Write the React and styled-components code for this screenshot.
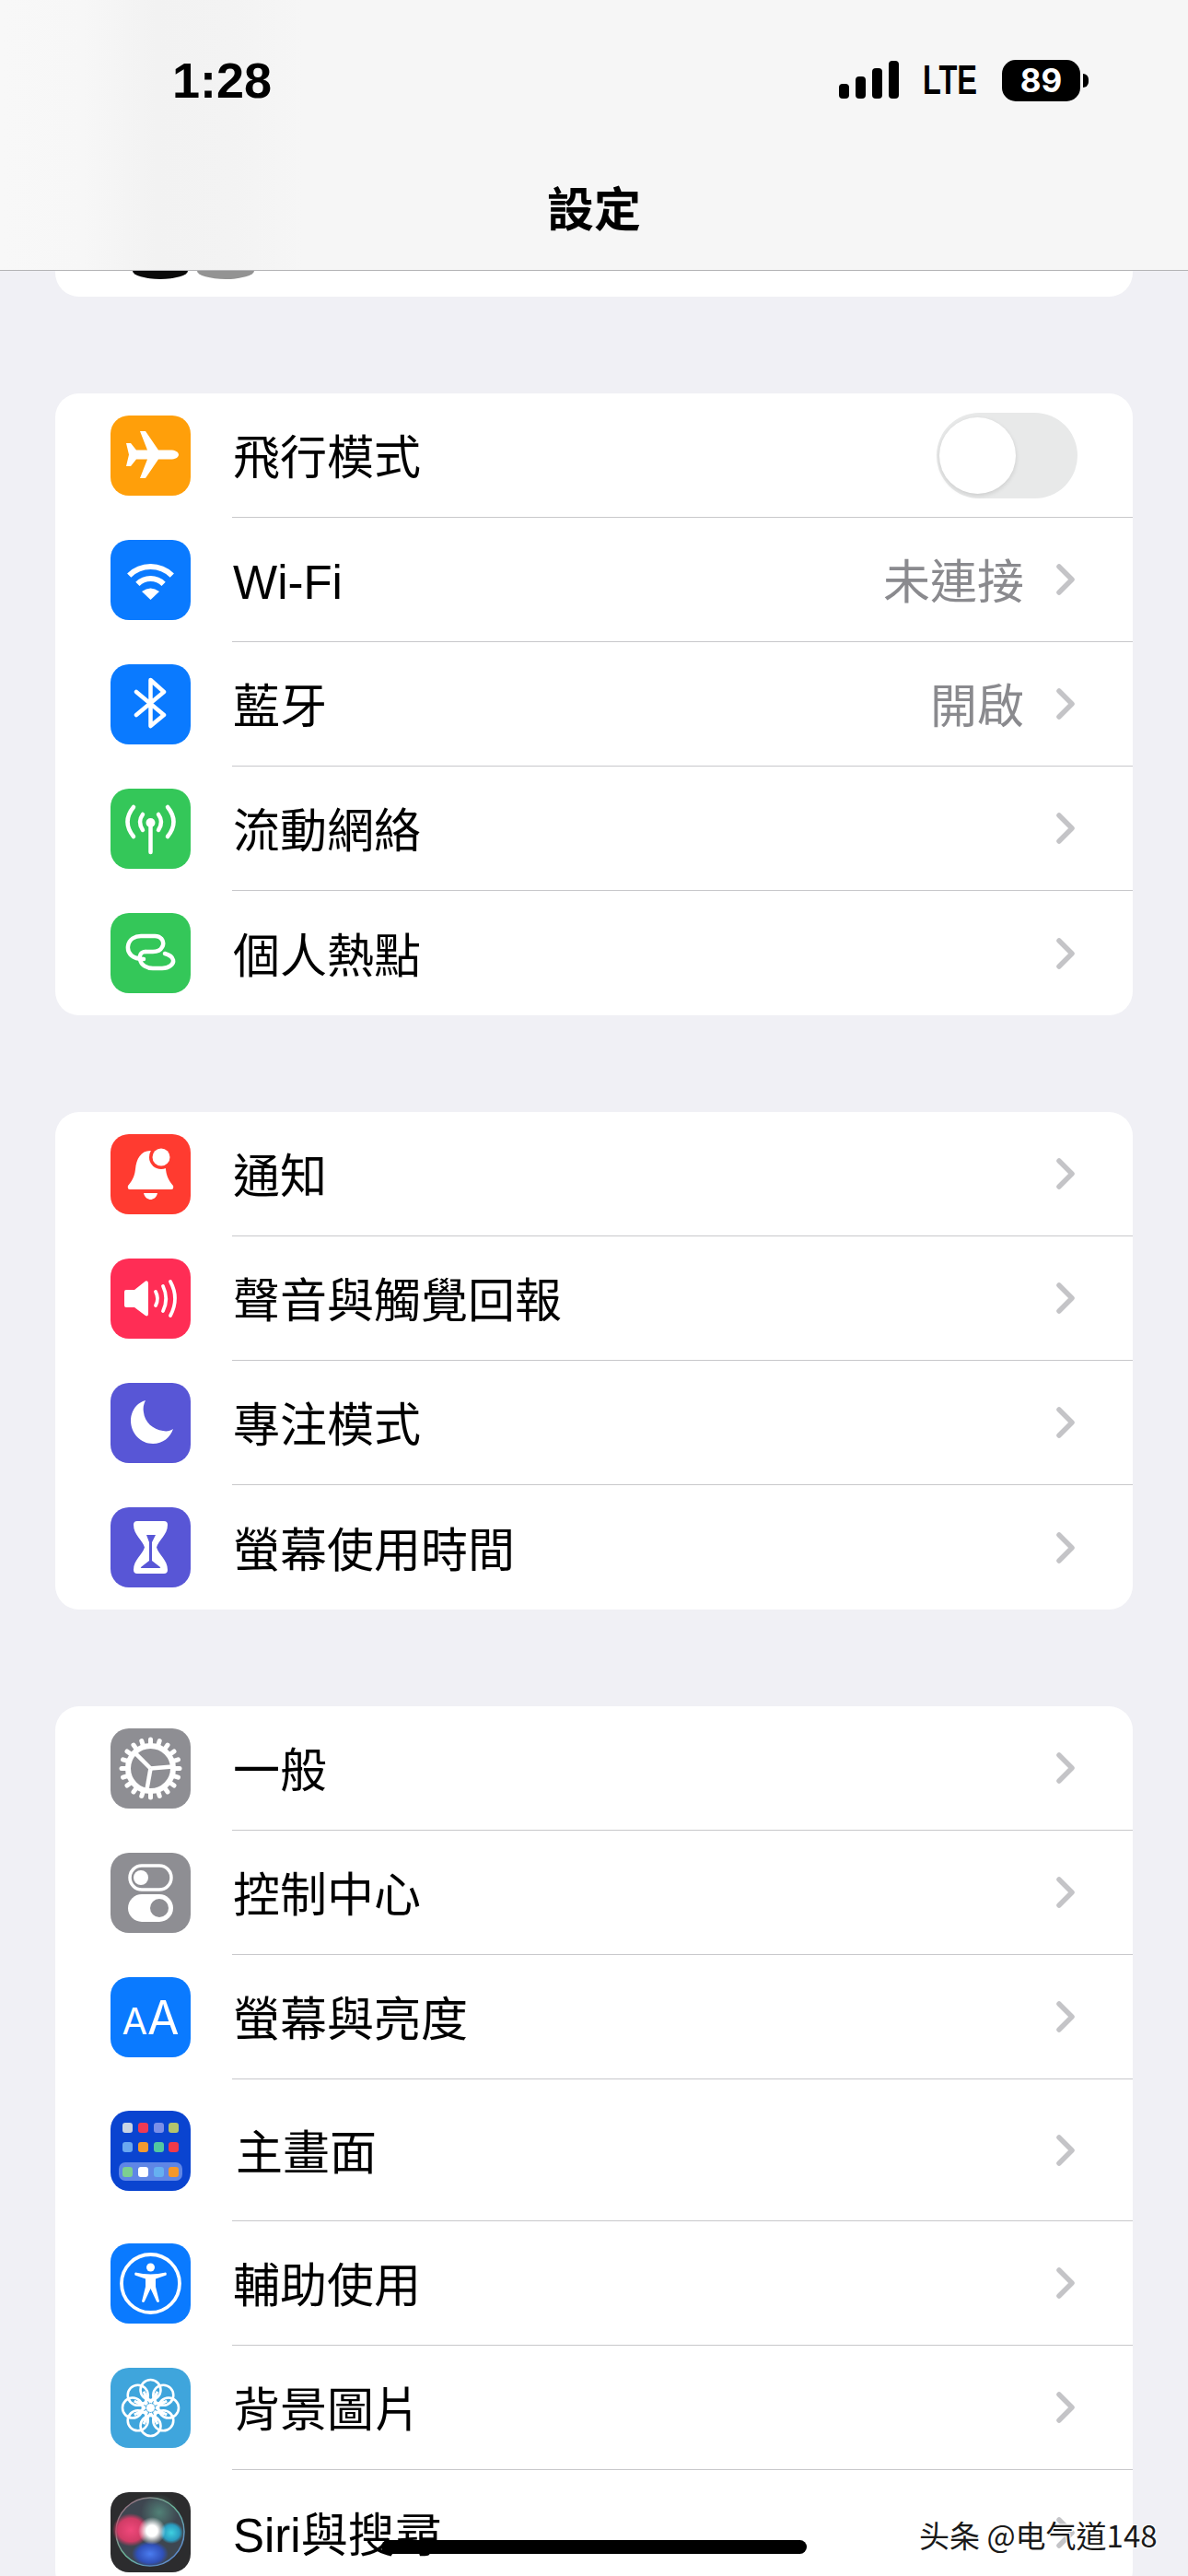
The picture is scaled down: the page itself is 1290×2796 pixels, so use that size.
import React from 'react';
import styled, { createGlobalStyle } from 'styled-components';

const GlobalStyle = createGlobalStyle`
  html, body {
    margin: 0;
    padding: 0;
    background: #f0f0f5;
  }
`;

const CJK = `"Noto Sans CJK TC", "Noto Sans CJK SC", sans-serif`;

const Page = styled.div`
  position: relative;
  width: 1290px;
  height: 2796px;
  overflow: hidden;
  background: #f0f0f5;
  font-family: "Liberation Sans", ${CJK};
  color: #000;
`;

const NavBar = styled.header`
  box-sizing: border-box;
  height: 294px;
  padding-top: 62px;
  border-bottom: 1px solid #b4b4b6;
  background: linear-gradient(90deg, #f8f8f8 0, #f7f7f7 90px, #f2f2f2 170px, #f3f3f3 250px, #f6f6f6 330px, #f6f6f6 100%);
`;

const StatusBar = styled.div`
  display: flex;
  align-items: center;
  justify-content: space-between;
  height: 50px;
  padding: 0 108px 0 187px;
`;

const Clock = styled.span`
  font-family: "Liberation Sans", sans-serif;
  font-size: 54px;
  font-weight: 700;
  line-height: 50px;
`;

const StatusIcons = styled.div`
  display: flex;
  align-items: center;
`;

const Signal = styled.svg`
  display: block;
  width: 66px;
  height: 42px;
  margin-right: 25px;
`;

const Lte = styled.span`
  width: 61px;
  margin-right: 25px;
  font-family: "Liberation Sans", sans-serif;
  font-size: 44px;
  font-weight: 700;
  line-height: 50px;
  transform: scaleX(0.74);
  transform-origin: left center;
`;

const Battery = styled.span`
  position: relative;
  display: flex;
  align-items: center;
  justify-content: center;
  width: 85px;
  height: 45px;
  margin-right: 9px;
  border-radius: 15px;
  background: #000;
  color: #fff;
  font-family: Inter, sans-serif;
  font-size: 35px;
  font-weight: 700;
  line-height: 1;

  &::after {
    content: '';
    position: absolute;
    right: -9px;
    top: 15px;
    width: 6px;
    height: 15px;
    border-radius: 0 8px 8px 0;
    background: #000;
  }
`;

const Title = styled.h1`
  margin: 75px 0 0;
  font-family: ${CJK};
  font-size: 51px;
  font-weight: 700;
  line-height: 74px;
  text-align: center;
`;

const Groups = styled.main`
  display: flex;
  flex-direction: column;
  gap: 105px;
  padding: 0 60px;
`;

const Card = styled.section`
  flex: none;
  overflow: hidden;
  border-radius: 26px;
  background: #fff;
`;

const ProfileStub = styled(Card)`
  display: flex;
  gap: 10px;
  height: 28px;
  padding-left: 84px;
  border-radius: 0 0 26px 26px;
`;

const Avatar = styled.div`
  flex: none;
  width: ${({ $width }) => $width}px;
  height: 9px;
  border-radius: 0 0 50% 50% / 0 0 100% 100%;
  background: ${({ $color }) => $color};
`;

const Row = styled.div`
  display: flex;
  align-items: center;
  height: ${({ $tall }) => ($tall ? 154 : 135)}px;
`;

const IconBox = styled.div`
  display: flex;
  flex: none;
  align-items: center;
  justify-content: center;
  width: 87px;
  height: 87px;
  margin: 0 45px 0 60px;
  overflow: hidden;
  border-radius: 20px;
  background: ${({ $bg }) => $bg};
`;

const Glyph = styled.svg`
  display: block;
  width: 87px;
  height: 87px;
`;

const AaText = styled.span`
  display: flex;
  align-items: baseline;
  color: #fff;
  font-family: Inter, sans-serif;
  font-weight: 400;
  line-height: 1;
`;

const AaSmall = styled.span`
  font-size: 40px;
`;

const AaBig = styled.span`
  font-size: 50px;
`;

const RowBody = styled.div`
  display: flex;
  flex: 1;
  align-items: center;
  align-self: stretch;
  justify-content: space-between;
  padding-right: 63px;
  box-sizing: border-box;
  border-bottom: 1px solid #c8c8cb;

  ${Row}:last-child & {
    border-bottom: none;
  }
`;

const Label = styled.span`
  margin-left: ${({ $tall }) => ($tall ? 4 : 1)}px;
  padding-top: 8px;
  font-size: 51px;
  font-weight: 400;
  line-height: 1.2;
`;

const Accessory = styled.div`
  display: flex;
  align-items: center;
  gap: 35px;
`;

const Value = styled.span`
  padding-top: 8px;
  color: #8a8a8e;
  font-size: 51px;
  line-height: 1.2;
`;

const Chevron = styled.svg`
  display: block;
  width: 20px;
  height: 34px;
`;

const Toggle = styled.div`
  display: flex;
  align-items: center;
  box-sizing: border-box;
  width: 153px;
  height: 93px;
  margin-right: -3px;
  padding-left: 3px;
  border-radius: 47px;
  background: #e8e9e9;
`;

const ToggleKnob = styled.div`
  width: 83px;
  height: 83px;
  border-radius: 50%;
  background: #fff;
  box-shadow: 0 2px 5px rgba(0, 0, 0, 0.12);
`;

const HomeIndicator = styled.div`
  position: absolute;
  left: 414px;
  top: 2757px;
  width: 462px;
  height: 15px;
  border-radius: 8px;
  background: #000;
`;

const Watermark = styled.div`
  position: absolute;
  left: 998px;
  top: 2730px;
  font-family: ${CJK};
  font-size: 33px;
  line-height: 42px;
  white-space: nowrap;
  color: #1a1a1a;
  text-shadow: 1px 1px 0 #fff, -1px 1px 0 #fff, 1px -1px 0 #fff, -1px -1px 0 #fff;
`;

const white = { fill: 'none', stroke: '#fff', strokeLinecap: 'round', strokeLinejoin: 'round' };

const Airplane = () => (
  <Glyph viewBox="0 0 87 87">
    <path
      fill="#fff"
      d="M74 42.5c0-3-4-5-9-5H52L38 17h-6l8 20.5H28L22 30h-5l3 12.5L17 55h5l6-7.5h12L32 68h6l14-20.5h13c5 0 9-2 9-5z"
    />
  </Glyph>
);

const Wifi = () => (
  <Glyph viewBox="0 0 87 87">
    <g fill="none" stroke="#fff" strokeWidth="6">
      <path d="M20.2 38.7A33 33 0 0 1 66.8 38.7" />
      <path d="M29.4 47.9A20 20 0 0 1 57.6 47.9" />
    </g>
    <path fill="#fff" d="M43.5 65L34 56Q43.5 49 53 56Z" />
  </Glyph>
);

const Bluetooth = () => (
  <Glyph viewBox="0 0 87 87">
    <path {...white} strokeWidth="4.5" d="M28 30L58 55L43.5 67V17L58 30L28 55" />
  </Glyph>
);

const Antenna = () => (
  <Glyph viewBox="0 0 87 87">
    <g {...white} strokeWidth="4.5">
      <path d="M43.5 40V69" />
      <path d="M35 28Q29 36 35 45M52 28Q58 36 52 45" />
      <path d="M25 20Q12 36 25 52M62 20Q75 36 62 52" />
    </g>
    <circle cx="43.5" cy="37" r="5" fill="#fff" />
  </Glyph>
);

const Hotspot = () => (
  <Glyph viewBox="0 0 87 87">
    <g {...white} strokeWidth="4.5">
      <path d="M36 50C24 50 18 44 19 36C20 28 27 25 33 25H48C56 25 59 32 56 37C54 41 50 42 46 42H38" />
      <path d="M38 42C33 42 31 46 32 50C33 57 40 60 46 60H56C64 60 69 55 68 51C67 47 63 45 59 44" />
    </g>
  </Glyph>
);

const Bell = () => (
  <Glyph viewBox="0 0 87 87">
    <path
      fill="#fff"
      d="M43 18C33 18 28 27 27 38C26 47 23 51 19 56Q18 60 21 60H66Q69 60 68 56C64 51 61 47 60 38C59 27 54 18 43 18Z"
    />
    <path fill="#fff" d="M36 64H51C50 69 46 71 43.5 71C41 71 37 69 36 64Z" />
    <circle cx="55" cy="25" r="13" fill="#ff3b30" />
    <circle cx="55" cy="25" r="9.5" fill="#fff" />
  </Glyph>
);

const Speaker = () => (
  <Glyph viewBox="0 0 87 87">
    <path
      fill="#fff"
      d="M15 36Q15 34 17 34H26L38 24.5Q41 23.5 41 27V60Q41 63.5 38 62L26 53H17Q15 53 15 51Z"
    />
    <g {...white} strokeWidth="3.8">
      <path d="M49 36Q53 43.5 49 51" />
      <path d="M57 30Q63.5 43.5 57 57" />
      <path d="M65 25Q75 43.5 65 62" />
    </g>
  </Glyph>
);

const Moon = () => (
  <Glyph viewBox="0 0 87 87">
    <path
      fill="#fff"
      d="M38 19C27 22 22 32 22 41C22 55 33 66 46 66C57 66 65 59 68 50C65 52 61 53 57 52C46 51 37 42 36 32C35 27 36 23 38 19Z"
    />
  </Glyph>
);

const Hourglass = () => (
  <Glyph viewBox="0 0 87 87">
    <path
      fill="#fff"
      d="M29 15H58Q62 15 62 19C62 30 52 36 50 43.5C52 51 62 57 62 68Q62 72 58 72H29Q25 72 25 68C25 57 35 51 37 43.5C35 36 25 30 25 19Q25 15 29 15Z"
    />
    <path fill="#5856d6" d="M39 30H49L45 38V58L54 65Q55 66 53 66H34Q32 66 33 65L42 58V38Z" />
  </Glyph>
);

const gearTeeth = Array.from({ length: 20 }, (_, i) => (i * 360) / 20);

const Gear = () => (
  <Glyph viewBox="0 0 87 87">
    <g stroke="#fff" fill="none">
      <circle cx="43.5" cy="43.5" r="24.5" strokeWidth="6" />
      {gearTeeth.map(angle => (
        <path
          key={angle}
          d="M43.5 18V12"
          strokeWidth="5"
          strokeLinecap="round"
          transform={`rotate(${angle} 43.5 43.5)`}
        />
      ))}
      {[85, 190, 315].map(angle => (
        <path
          key={angle}
          d="M43.5 43.5V20"
          strokeWidth="4.5"
          transform={`rotate(${angle} 43.5 43.5)`}
        />
      ))}
    </g>
  </Glyph>
);

const Switches = () => (
  <Glyph viewBox="0 0 87 87">
    <rect x="21" y="14" width="45" height="26" rx="13" fill="none" stroke="#fff" strokeWidth="3.5" />
    <circle cx="33" cy="27" r="8" fill="#fff" />
    <rect x="19" y="45" width="49" height="30" rx="15" fill="#fff" />
    <circle cx="53" cy="60" r="10" fill="#8e8e93" />
  </Glyph>
);

const HOME_DOTS = [
  ['#c8d4e4', 13, 13],
  ['#ee3a55', 30, 13],
  ['#7a8fe8', 47, 13],
  ['#b4c46c', 63, 13],
  ['#6aa8f0', 13, 34],
  ['#f39a30', 30, 34],
  ['#52c8a0', 47, 34],
  ['#ef3a4a', 63, 34],
  ['#7cd090', 13, 61],
  ['#ffffff', 30, 61],
  ['#66b0f0', 47, 61],
  ['#f7982a', 63, 61],
];

const HomeGrid = () => (
  <Glyph viewBox="0 0 87 87">
    <rect x="9" y="56" width="69" height="20" rx="7" fill="#5f86e6" />
    {HOME_DOTS.map(([color, x, y]) => (
      <rect key={color + x + y} x={x} y={y} width="11" height="11" rx="3" fill={color} />
    ))}
  </Glyph>
);

const Accessibility = () => (
  <Glyph viewBox="0 0 87 87">
    <circle cx="43.5" cy="43.5" r="31.5" fill="none" stroke="#fff" strokeWidth="3.8" />
    <circle cx="43.5" cy="26" r="4.5" fill="#fff" />
    <path
      fill="#fff"
      d="M27 31.5Q43.5 35.5 60 31.5Q61.5 32.5 60.5 34.5L49 38.5V47L53 63Q51.5 65 50 63L43.5 49L37 63Q35.5 65 34 63L38 47V38.5L26.5 34.5Q25.5 32.5 27 31.5Z"
    />
  </Glyph>
);

const Flower = () => (
  <Glyph viewBox="0 0 87 87">
    <g fill="none" stroke="#fff" strokeWidth="2.6">
      {[0, 45, 90, 135, 180, 225, 270, 315].map(angle => (
        <g key={angle} transform={`rotate(${angle} 43.5 43.5)`}>
          <circle cx="43.5" cy="24" r="11" />
          <path d="M43.5 38L36 26M43.5 38L51 26" />
        </g>
      ))}
    </g>
    <circle cx="43.5" cy="43.5" r="4.5" fill="#fff" />
  </Glyph>
);

const SiriOrb = () => (
  <Glyph viewBox="0 0 87 87">
    <defs>
      <radialGradient id="siriPink">
        <stop offset="0" stopColor="#f0487a" />
        <stop offset="0.7" stopColor="#d03c66" />
        <stop offset="1" stopColor="#c83b60" stopOpacity="0" />
      </radialGradient>
      <radialGradient id="siriTeal">
        <stop offset="0" stopColor="#3fd0e0" />
        <stop offset="0.7" stopColor="#2a9cc0" />
        <stop offset="1" stopColor="#2a9cc0" stopOpacity="0" />
      </radialGradient>
      <radialGradient id="siriBlue">
        <stop offset="0" stopColor="#4a7cf0" />
        <stop offset="0.7" stopColor="#3050b8" />
        <stop offset="1" stopColor="#3050b8" stopOpacity="0" />
      </radialGradient>
      <radialGradient id="siriGreen">
        <stop offset="0" stopColor="#5a9a88" stopOpacity="0.7" />
        <stop offset="1" stopColor="#5a9a88" stopOpacity="0" />
      </radialGradient>
      <radialGradient id="siriCore">
        <stop offset="0" stopColor="#fff" />
        <stop offset="0.4" stopColor="#fff" />
        <stop offset="1" stopColor="#fff" stopOpacity="0" />
      </radialGradient>
      <linearGradient id="siriRing" x1="0" y1="0" x2="1" y2="1">
        <stop offset="0" stopColor="#a05a78" />
        <stop offset="0.5" stopColor="#6ab89a" />
        <stop offset="1" stopColor="#5a7ae0" />
      </linearGradient>
    </defs>
    <circle cx="43" cy="43" r="37" fill="#3e4650" stroke="url(#siriRing)" strokeWidth="1.5" />
    <circle cx="53" cy="22" r="20" fill="url(#siriGreen)" />
    <ellipse cx="22" cy="41" rx="20" ry="18" fill="url(#siriPink)" />
    <ellipse cx="43" cy="67" rx="20" ry="14" fill="url(#siriBlue)" />
    <ellipse cx="66" cy="44" rx="13" ry="12" fill="url(#siriTeal)" />
    <circle cx="45" cy="42" r="15" fill="url(#siriCore)" />
  </Glyph>
);

const ChevronIcon = () => (
  <Chevron viewBox="0 0 20 34">
    <path d="M3 3L17 17L3 31" fill="none" stroke="#c4c4c7" strokeWidth="5.5" strokeLinecap="round" strokeLinejoin="round" />
  </Chevron>
);

const AaIcon = () => (
  <AaText>
    <AaSmall>A</AaSmall>
    <AaBig>A</AaBig>
  </AaText>
);

const GROUPS = [
  [
    { label: '飛行模式', bg: '#ff9f0a', Icon: Airplane, toggle: true },
    { label: 'Wi-Fi', bg: '#0a7aff', Icon: Wifi, value: '未連接' },
    { label: '藍牙', bg: '#0a7aff', Icon: Bluetooth, value: '開啟' },
    { label: '流動網絡', bg: '#34c759', Icon: Antenna },
    { label: '個人熱點', bg: '#34c759', Icon: Hotspot },
  ],
  [
    { label: '通知', bg: '#ff3b30', Icon: Bell },
    { label: '聲音與觸覺回報', bg: '#ff2d55', Icon: Speaker },
    { label: '專注模式', bg: '#5856d6', Icon: Moon },
    { label: '螢幕使用時間', bg: '#5856d6', Icon: Hourglass },
  ],
  [
    { label: '一般', bg: '#8e8e93', Icon: Gear },
    { label: '控制中心', bg: '#8e8e93', Icon: Switches },
    { label: '螢幕與亮度', bg: '#0a7aff', Icon: AaIcon },
    { label: '主畫面', bg: '#0a44d0', Icon: HomeGrid, tall: true },
    { label: '輔助使用', bg: '#0a7aff', Icon: Accessibility },
    { label: '背景圖片', bg: '#3fa5dc', Icon: Flower },
    { label: 'Siri與搜尋', bg: '#2c2c2e', Icon: SiriOrb },
  ],
];

const SettingsRow = ({ label, bg, Icon, value, toggle, tall }) => (
  <Row $tall={tall}>
    <IconBox $bg={bg}>
      <Icon />
    </IconBox>
    <RowBody>
      <Label $tall={tall}>{label}</Label>
      {toggle ? (
        <Toggle>
          <ToggleKnob />
        </Toggle>
      ) : (
        <Accessory>
          {value && <Value>{value}</Value>}
          <ChevronIcon />
        </Accessory>
      )}
    </RowBody>
  </Row>
);

const App = () => (
  <Page>
    <GlobalStyle />
    <NavBar>
      <StatusBar>
        <Clock>1:28</Clock>
        <StatusIcons>
          <Signal viewBox="0 0 66 42">
            <rect x="0" y="25" width="11" height="16" rx="4" />
            <rect x="18" y="17" width="11" height="24" rx="4" />
            <rect x="36" y="8" width="11" height="33" rx="4" />
            <rect x="54" y="0" width="11" height="41" rx="4" />
          </Signal>
          <Lte>LTE</Lte>
          <Battery>89</Battery>
        </StatusIcons>
      </StatusBar>
      <Title>設定</Title>
    </NavBar>
    <Groups>
      <ProfileStub>
        <Avatar $width={60} $color="#0a0a0a" />
        <Avatar $width={62} $color="#939393" />
      </ProfileStub>
      {GROUPS.map(rows => (
        <Card key={rows[0].label}>
          {rows.map(row => (
            <SettingsRow key={row.label} {...row} />
          ))}
        </Card>
      ))}
    </Groups>
    <HomeIndicator />
    <Watermark>头条 @电气道148</Watermark>
  </Page>
);

export default App;
